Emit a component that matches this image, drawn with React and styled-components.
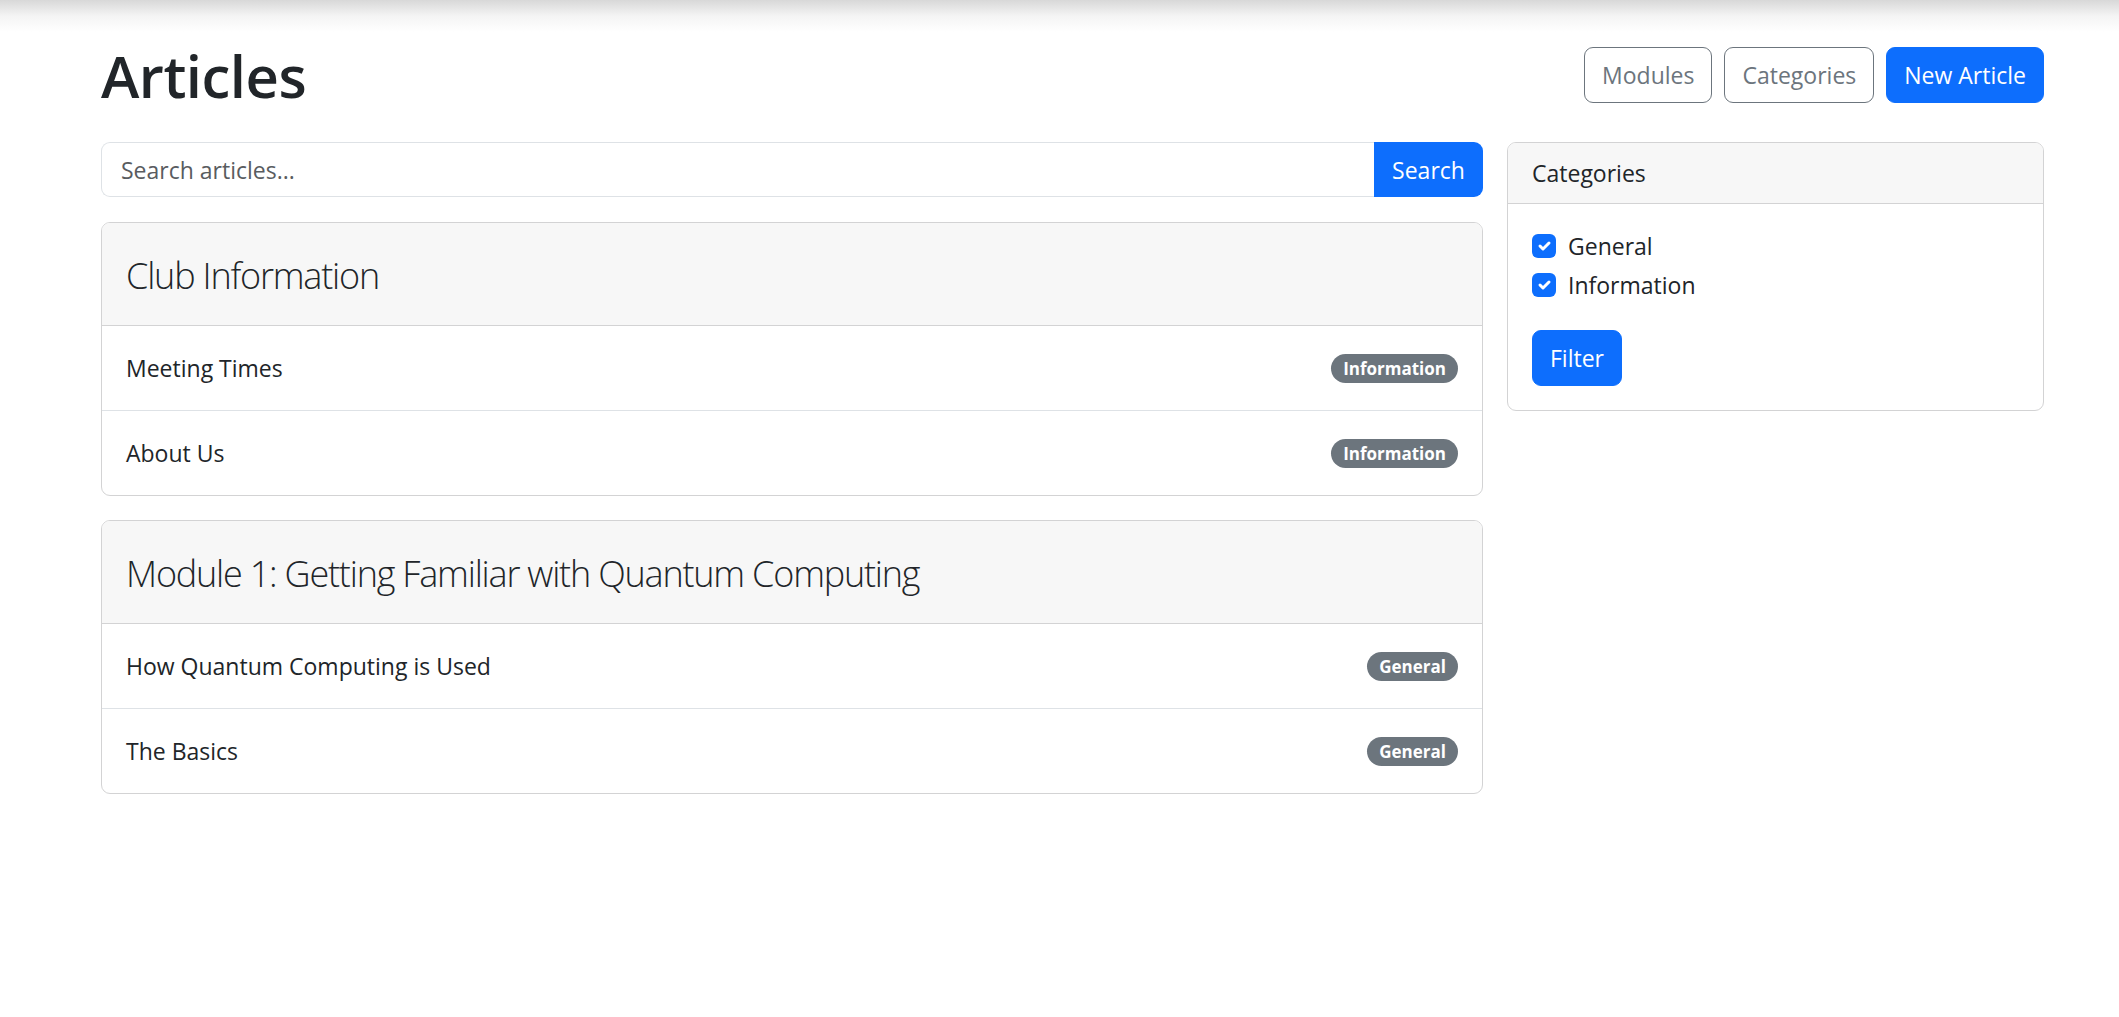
import React from 'react';
import styled, { createGlobalStyle } from 'styled-components';

const BLUE = '#0d6efd';
const GREY = '#6c757d';
const TEXT = '#212529';
const CARD_BORDER = '#d3d3d4';
const ROW_BORDER = '#dee2e6';
const RADIUS = 9;
const FONT = '"Open Sans", "Noto Sans", "Liberation Sans", sans-serif';

const GlobalStyle = createGlobalStyle`
  html, body {
    margin: 0;
    padding: 0;
    background: #fff;
  }
  body {
    font-family: ${FONT};
    font-size: 23px;
    line-height: 36px;
    color: ${TEXT};
  }
  * {
    box-sizing: border-box;
  }
`;

const Page = styled.div`
  min-height: 1017px;
  padding: 0 75px 0 101px;
  background: linear-gradient(to bottom, #d8d8d8 0, #f4f4f4 16px, #fff 32px) no-repeat;
`;

const Header = styled.header`
  display: flex;
  justify-content: space-between;
  align-items: center;
  padding-top: 47px;
`;

const Title = styled.h1`
  margin: 0;
  font-size: 58px;
  line-height: 55px;
  font-weight: 600;
  letter-spacing: -0.5px;
`;

const Actions = styled.div`
  display: flex;
  gap: 12px;
`;

const Button = styled.button`
  font-family: ${FONT};
  font-size: 23px;
  line-height: 36px;
  padding: 9px 17px;
  border-radius: ${RADIUS}px;
  cursor: pointer;
  border: 1px solid ${(p) => (p.$outline ? GREY : BLUE)};
  background: ${(p) => (p.$outline ? '#fff' : BLUE)};
  color: ${(p) => (p.$outline ? GREY : '#fff')};
`;

const Main = styled.div`
  display: grid;
  grid-template-columns: 1fr 537px;
  gap: 24px;
  margin-top: 39px;
  align-items: start;
`;

const Column = styled.div`
  display: flex;
  flex-direction: column;
  gap: 24px;
`;

const SearchGroup = styled.form`
  display: flex;
  height: 55px;
  margin-bottom: 1px;
`;

const SearchInput = styled.input`
  flex: 1;
  font-family: ${FONT};
  font-size: 23px;
  color: ${TEXT};
  padding: 0 19px;
  border: 1px solid ${ROW_BORDER};
  border-right: none;
  border-radius: ${RADIUS}px 0 0 ${RADIUS}px;
  outline: none;

  &::placeholder {
    color: #595c5f;
  }
`;

const SearchButton = styled.button`
  width: 109px;
  font-family: ${FONT};
  font-size: 23px;
  border: none;
  background: ${BLUE};
  color: #fff;
  border-radius: 0 ${RADIUS}px ${RADIUS}px 0;
`;

const Card = styled.section`
  border: 1px solid ${CARD_BORDER};
  border-radius: ${RADIUS}px;
  overflow: hidden;
  background: #fff;
`;

const CardHeader = styled.div`
  background: #f7f7f7;
  border-bottom: 1px solid ${CARD_BORDER};
  padding: ${(p) => (p.$large ? '26px 24px 22px' : '12px 24px')};
`;

const ModuleTitle = styled.h3`
  margin: 0;
  font-size: 36px;
  line-height: 54px;
  font-weight: 300;
  letter-spacing: -1.2px;
`;

const Row = styled.div`
  display: flex;
  justify-content: space-between;
  align-items: center;
  padding: 24px;
  border-top: 1px solid ${ROW_BORDER};

  &:first-child {
    border-top: none;
  }
`;

const Badge = styled.span`
  background: ${GREY};
  color: #fff;
  font-size: 17px;
  font-weight: 700;
  line-height: 18px;
  padding: 6px 12px 5px;
  border-radius: 999px;
`;

const CardBody = styled.div`
  padding: 24px;
`;

const Check = styled.label`
  display: flex;
  align-items: flex-start;
  gap: 12px;
  min-height: 36px;
  margin-bottom: 3px;
`;

const Box = styled.span`
  width: 24px;
  height: 24px;
  margin-top: 6px;
  border-radius: 6px;
  background: ${BLUE};
  display: flex;
  align-items: center;
  justify-content: center;
`;

const FilterButton = styled(Button)`
  margin-top: 24px;
`;

const modules = [
  {
    title: 'Club Information',
    articles: [
      { name: 'Meeting Times', category: 'Information' },
      { name: 'About Us', category: 'Information' },
    ],
  },
  {
    title: 'Module 1: Getting Familiar with Quantum Computing',
    articles: [
      { name: 'How Quantum Computing is Used', category: 'General' },
      { name: 'The Basics', category: 'General' },
    ],
  },
];

const Tick = () => (
  <svg width="20" height="20" viewBox="0 0 20 20">
    <path
      d="M6 10l3 3l6-6"
      fill="none"
      stroke="#fff"
      strokeWidth="3"
      strokeLinecap="round"
      strokeLinejoin="round"
    />
  </svg>
);

export default function App() {
  return (
    <>
      <GlobalStyle />
      <Page>
        <Header>
          <Title>Articles</Title>
          <Actions>
            <Button $outline>Modules</Button>
            <Button $outline>Categories</Button>
            <Button>New Article</Button>
          </Actions>
        </Header>

        <Main>
          <Column>
            <SearchGroup onSubmit={(e) => e.preventDefault()}>
              <SearchInput placeholder="Search articles..." />
              <SearchButton type="submit">Search</SearchButton>
            </SearchGroup>

            {modules.map((m) => (
              <Card key={m.title}>
                <CardHeader $large>
                  <ModuleTitle>{m.title}</ModuleTitle>
                </CardHeader>
                <div>
                  {m.articles.map((a) => (
                    <Row key={a.name}>
                      <span>{a.name}</span>
                      <Badge>{a.category}</Badge>
                    </Row>
                  ))}
                </div>
              </Card>
            ))}
          </Column>

          <Card>
            <CardHeader>Categories</CardHeader>
            <CardBody>
              {['General', 'Information'].map((c) => (
                <Check key={c}>
                  <Box>
                    <Tick />
                  </Box>
                  {c}
                </Check>
              ))}
              <FilterButton>Filter</FilterButton>
            </CardBody>
          </Card>
        </Main>
      </Page>
    </>
  );
}
